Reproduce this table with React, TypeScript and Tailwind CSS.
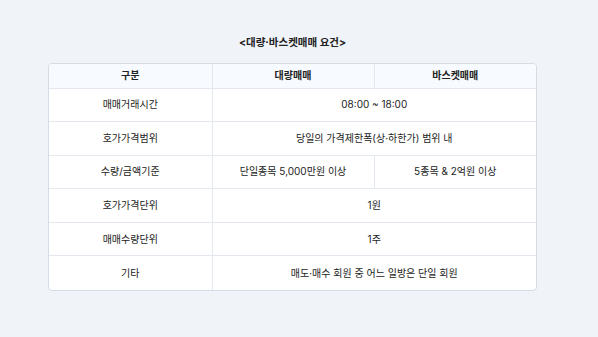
const rows = [
  { label: "매매거래시간", cells: ["08:00 ~ 18:00"] },
  { label: "호가가격범위", cells: ["당일의 가격제한폭(상·하한가) 범위 내"] },
  { label: "수량/금액기준", cells: ["단일종목 5,000만원 이상", "5종목 & 2억원 이상"] },
  { label: "호가가격단위", cells: ["1원"] },
  { label: "매매수량단위", cells: ["1주"] },
  { label: "기타", cells: ["매도·매수 회원 중 어느 일방은 단일 회원"] },
];

const App = () => {
  return (
    <div
      className="w-[598px] h-[337px] bg-[#f0f3f8] text-[#222222] pt-[35px] pl-[48px]"
      style={{ fontFamily: '"Inter", "Noto Sans CJK KR", sans-serif' }}
    >
      <div className="w-[489px]">
        <div className="h-[16px] text-center text-[10.5px] font-bold leading-[16px] whitespace-nowrap">
          &lt;대량·바스켓매매 요건&gt;
        </div>
        <div className="mt-[12px] w-[489px] rounded-[4px] border border-[#d6dce5] bg-white overflow-hidden">
          <table className="w-full table-fixed border-collapse text-[10px]">
            <colgroup>
              <col className="w-[163px]" />
              <col className="w-[162px]" />
              <col />
            </colgroup>
            <thead>
              <tr className="h-[24px] bg-[#f7fafe]">
                <th className="font-bold border-b border-r border-[#e3e8ef]">구분</th>
                <th className="font-bold border-b border-r border-[#e3e8ef]">대량매매</th>
                <th className="font-bold border-b border-[#e3e8ef]">바스켓매매</th>
              </tr>
            </thead>
            <tbody>
              {rows.map((row, i) => (
                <tr key={i} className="h-[33.6px]">
                  <td
                    className={`text-center border-r border-[#e3e8ef] ${
                      i < rows.length - 1 ? "border-b" : ""
                    }`}
                  >
                    {row.label}
                  </td>
                  {row.cells.length === 1 ? (
                    <td
                      colSpan={2}
                      className={`text-center border-[#e3e8ef] ${
                        i < rows.length - 1 ? "border-b" : ""
                      }`}
                    >
                      {row.cells[0]}
                    </td>
                  ) : (
                    <>
                      <td className="text-center border-b border-r border-[#e3e8ef]">
                        {row.cells[0]}
                      </td>
                      <td className="text-center border-b border-[#e3e8ef]">{row.cells[1]}</td>
                    </>
                  )}
                </tr>
              ))}
            </tbody>
          </table>
        </div>
      </div>
    </div>
  );
};

export default App;
